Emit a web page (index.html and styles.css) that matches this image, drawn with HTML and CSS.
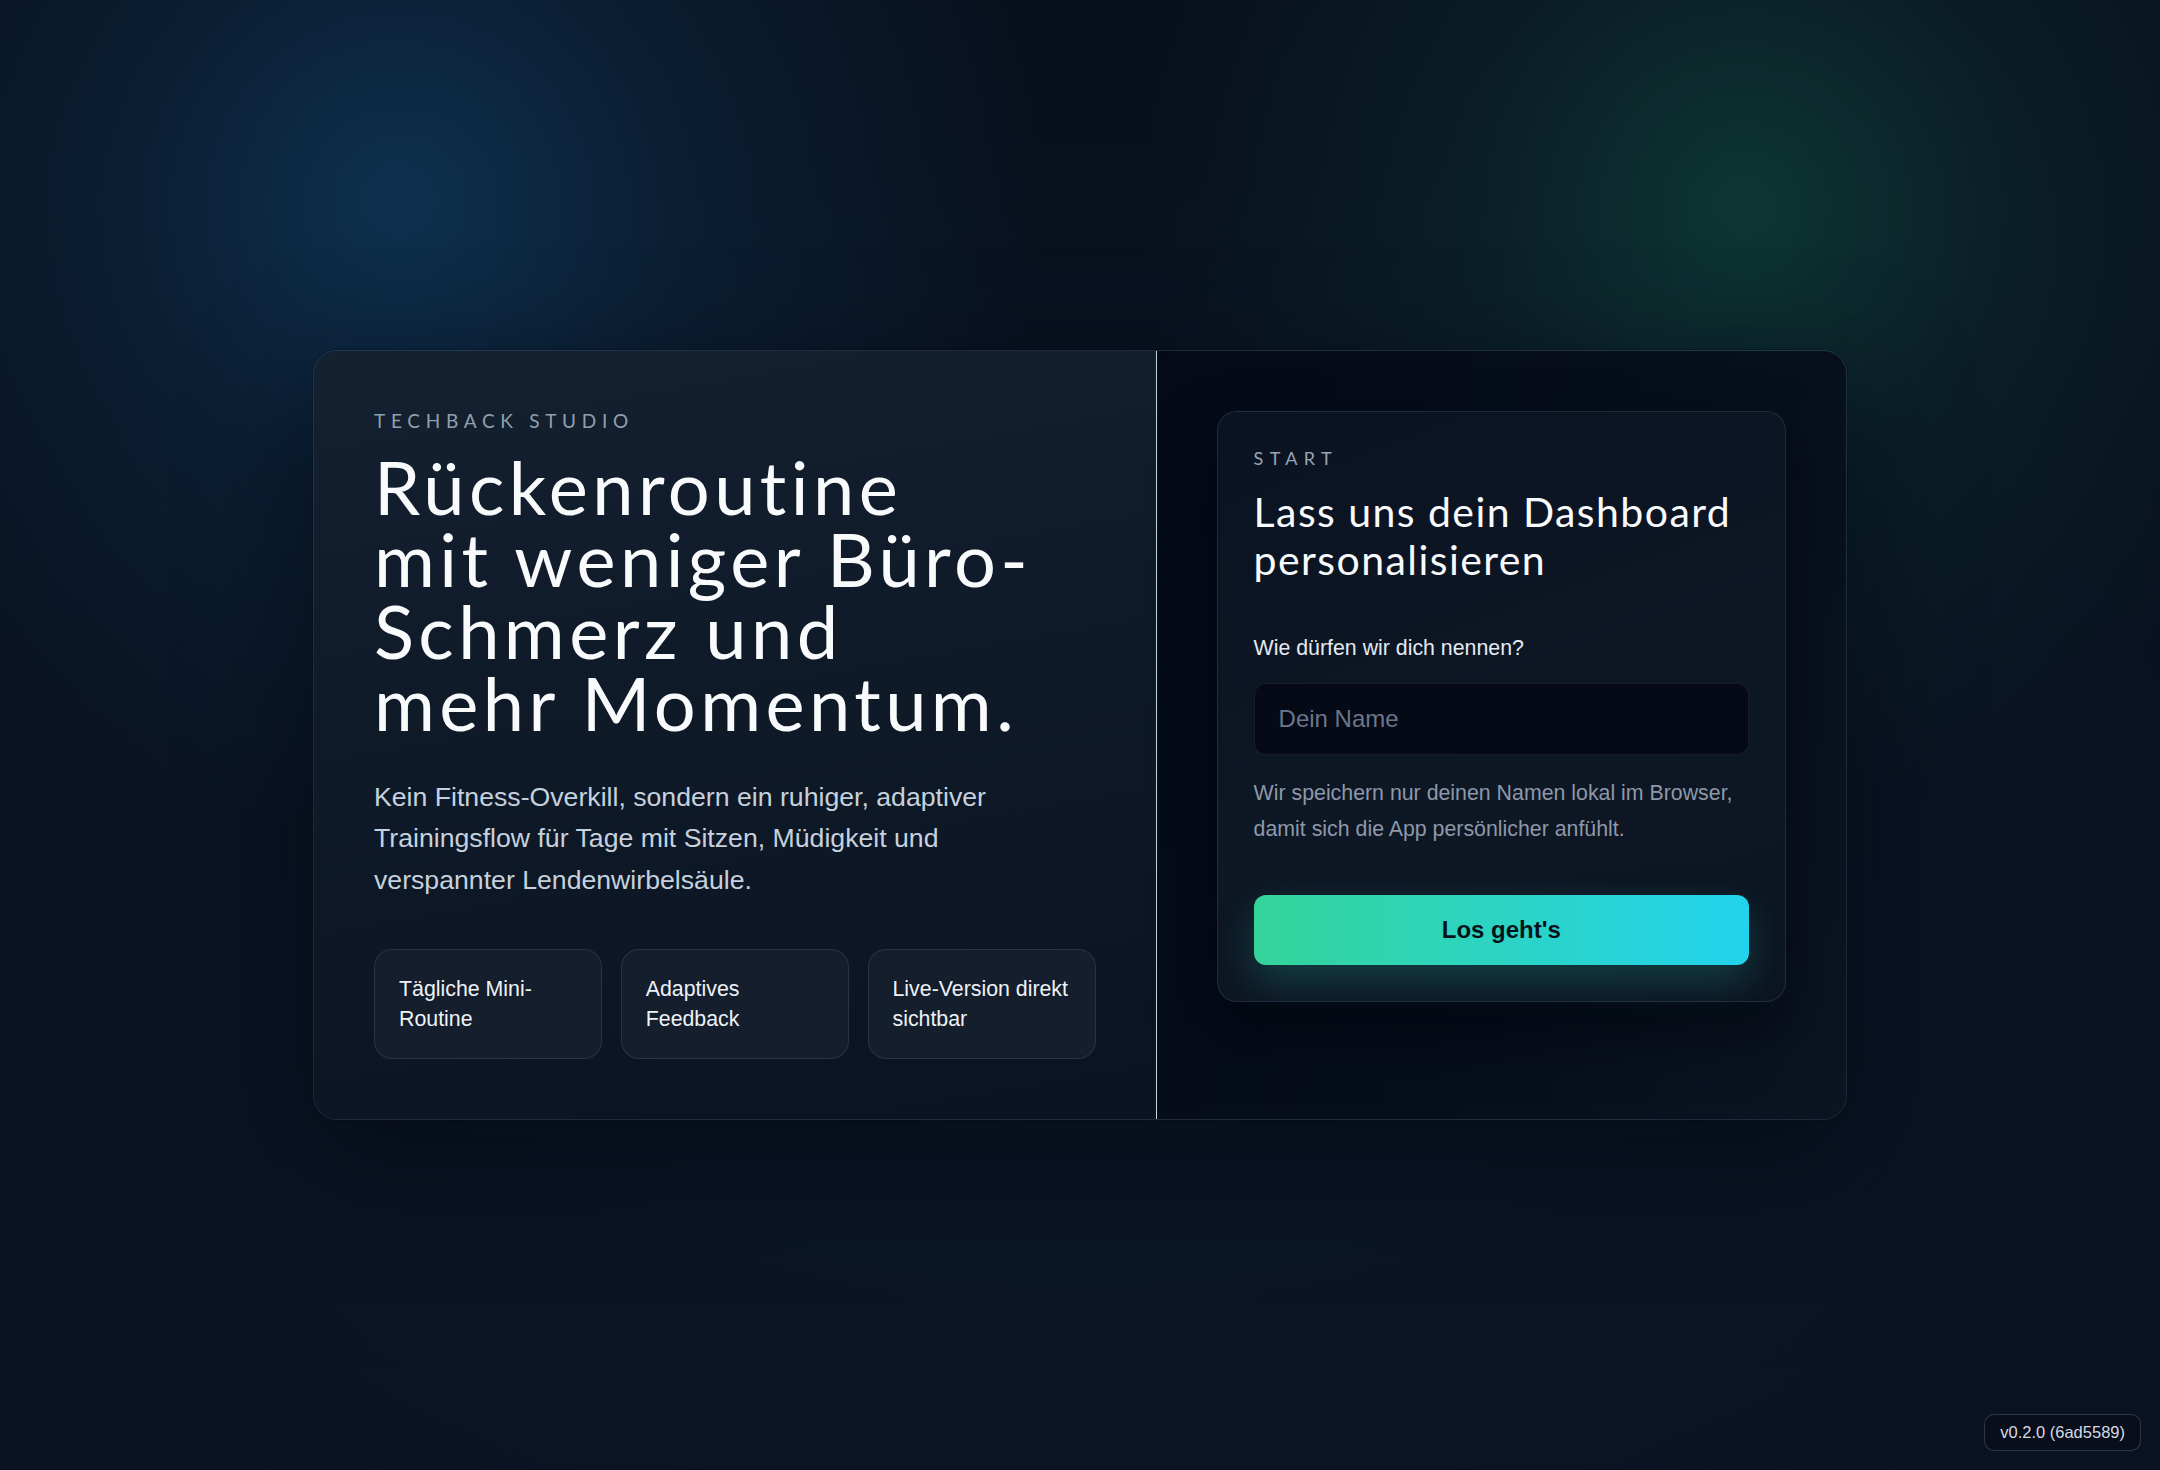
FILE: index.html
```html
<!DOCTYPE html>
<html lang="de">
<head>
<meta charset="utf-8">
<title>TechBack Studio – Start</title>
<link rel="stylesheet" href="styles.css">
</head>
<body>
<main class="page">
  <section class="shell">
    <div class="intro">
      <p class="eyebrow">TECHBACK STUDIO</p>
      <h1 class="hero-title">Rückenroutine<br>mit weniger Büro-Schmerz und mehr Momentum.</h1>
      <p class="lead">Kein Fitness-Overkill, sondern ein ruhiger, adaptiver Trainingsflow für Tage mit Sitzen, Müdigkeit und verspannter Lendenwirbelsäule.</p>
      <ul class="features">
        <li class="feature">Tägliche Mini-Routine</li>
        <li class="feature">Adaptives Feedback</li>
        <li class="feature">Live-Version direkt sichtbar</li>
      </ul>
    </div>
    <div class="onboarding">
      <form class="start-card">
        <p class="start-eyebrow">START</p>
        <h2 class="start-title">Lass uns dein Dashboard personalisieren</h2>
        <label class="field-label" for="name">Wie dürfen wir dich nennen?</label>
        <input class="field-input" id="name" type="text" placeholder="Dein Name">
        <p class="field-hint">Wir speichern nur deinen Namen lokal im Browser, damit sich die App persönlicher anfühlt.</p>
        <button class="cta" type="button">Los geht's</button>
      </form>
    </div>
  </section>
  <div class="version">v0.2.0 (6ad5589)</div>
</main>
</body>
</html>
```
FILE: styles.css
```css
* { box-sizing: border-box; }

html, body {
  margin: 0;
  padding: 0;
}

body {
  font-family: "Liberation Sans", Arial, sans-serif;
  font-size: 21.33px;
  color: #e2e8f0;
  background-color: #08101d;
  background-image:
    radial-gradient(circle 640px at 400px 200px, rgba(18, 68, 108, 0.62), rgba(18, 68, 108, 0.25) 45%, rgba(18, 68, 108, 0) 100%),
    radial-gradient(circle 600px at 1745px 205px, rgba(18, 84, 70, 0.55), rgba(18, 84, 70, 0.2) 45%, rgba(18, 84, 70, 0) 100%),
    radial-gradient(ellipse 1300px 760px at 50% 62%, rgba(14, 28, 46, 0.55), rgba(14, 28, 46, 0) 100%),
    linear-gradient(180deg, #08101d 0%, #0a1322 100%);
  min-height: 100vh;
}

.page {
  min-height: 100vh;
  display: grid;
  place-items: center;
  position: relative;
}

.shell {
  width: 1534px;
  display: grid;
  grid-template-columns: 1.1fr 0.9fr;
  border: 1px solid rgba(148, 163, 184, 0.16);
  border-radius: 24px;
  overflow: hidden;
  box-shadow: 0 40px 120px rgba(2, 6, 14, 0.55), 0 0 0 1px rgba(0, 0, 0, 0.2);
}

/* Left column */
.intro {
  padding: 60px;
  background: linear-gradient(170deg, #142130 0%, #0f1a29 45%, #0a1322 100%);
  border-right: 1px solid #c9d2dc;
}

.eyebrow {
  margin: 0;
  font-family: "Lato", "Liberation Sans", sans-serif;
  font-weight: 400;
  font-size: 19px;
  line-height: 20px;
  letter-spacing: 0.3em;
  color: #8fa1b0;
}

.hero-title {
  margin: 20px 0 0;
  max-width: 668px;
  font-family: "Lato", "Liberation Sans", sans-serif;
  font-weight: 400;
  font-size: 74px;
  line-height: 72px;
  letter-spacing: 0.06em;
  color: #f8fafc;
}

.lead {
  margin: 38px 0 0;
  max-width: 660px;
  font-size: 26.67px;
  line-height: 41.3px;
  color: #c6d1de;
}

.features {
  list-style: none;
  margin: 48px 0 0;
  padding: 0;
  display: grid;
  grid-template-columns: repeat(3, 1fr);
  gap: 18.67px;
}

.feature {
  padding: 24px 22px 24px 24px;
  min-height: 110px;
  border: 1px solid rgba(148, 163, 184, 0.17);
  border-radius: 18px;
  background: #141e2c;
  font-size: 21.33px;
  line-height: 30px;
  color: #eef2f7;
}

/* Right column */
.onboarding {
  padding: 60px;
  background: linear-gradient(110deg, #040a18 0%, #060d1b 55%, #0b1522 100%);
}

.start-card {
  padding: 36px;
  border: 1px solid rgba(148, 163, 184, 0.16);
  border-radius: 20px;
  background: linear-gradient(160deg, #0b1322 0%, #0e1724 60%, #0c1421 100%);
  box-shadow: 0 30px 60px rgba(1, 4, 10, 0.55);
  display: flex;
  flex-direction: column;
}

.start-eyebrow {
  margin: 0;
  font-family: "Lato", "Liberation Sans", sans-serif;
  font-weight: 400;
  font-size: 18px;
  line-height: 20px;
  letter-spacing: 0.35em;
  color: #9aa5b3;
}

.start-title {
  margin: 20px 0 0;
  font-family: "Lato", "Liberation Sans", sans-serif;
  font-weight: 400;
  font-size: 41px;
  line-height: 48px;
  letter-spacing: 0.035em;
  color: #f8fafc;
}

.field-label {
  margin-top: 50px;
  font-size: 21.33px;
  line-height: 28px;
  color: #e5eaf1;
}

.field-input {
  margin-top: 21px;
  height: 72px;
  width: 100%;
  padding: 0 24px;
  border: 1px solid rgba(148, 163, 184, 0.12);
  border-radius: 12px;
  background: #050a16;
  font-family: "Liberation Sans", Arial, sans-serif;
  font-size: 24px;
  color: #e2e8f0;
  outline: none;
}

.field-input::placeholder {
  color: #6b768a;
}

.field-hint {
  margin: 20px 0 0;
  font-size: 21.33px;
  line-height: 36px;
  color: #8d98aa;
}

.cta {
  margin-top: 48px;
  height: 70px;
  width: 100%;
  border: 0;
  border-radius: 12px;
  background: linear-gradient(90deg, #34d399 0%, #2dd4bf 45%, #22d3ee 100%);
  box-shadow: 0 16px 40px rgba(45, 212, 191, 0.22);
  font-family: "Liberation Sans", Arial, sans-serif;
  font-weight: 700;
  font-size: 24px;
  color: #05121c;
  cursor: pointer;
}

.version {
  position: absolute;
  right: 19px;
  bottom: 19px;
  height: 37px;
  padding: 0 15px;
  display: flex;
  align-items: center;
  border: 1px solid rgba(148, 163, 184, 0.28);
  border-radius: 10px;
  background: rgba(8, 14, 26, 0.9);
  font-size: 16.5px;
  color: #d5dbe4;
}
```
